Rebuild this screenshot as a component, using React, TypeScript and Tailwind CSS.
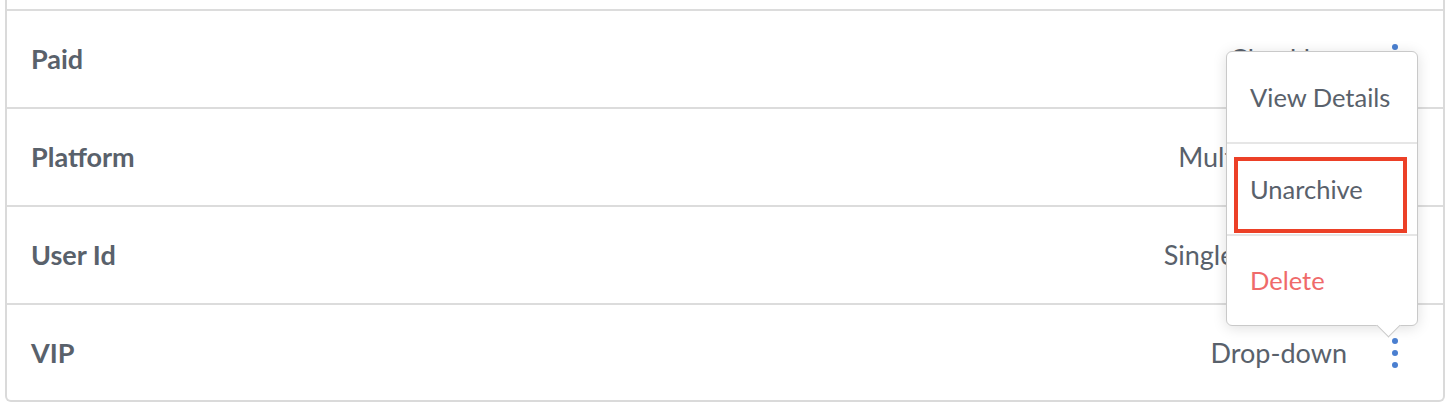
import React from "react";

const ROWS = [
  { label: "Paid", value: "Checkbox" },
  { label: "Platform", value: "Multi-line text" },
  { label: "User Id", value: "Single Line Text" },
  { label: "VIP", value: "Drop-down" },
];

const Kebab = () => (
  <span className="flex h-9 w-6 flex-col items-center justify-center gap-[6px]">
    <span className="h-[6px] w-[6px] rounded-full bg-[#4a7fd0]" />
    <span className="h-[6px] w-[6px] rounded-full bg-[#4a7fd0]" />
    <span className="h-[6px] w-[6px] rounded-full bg-[#4a7fd0]" />
  </span>
);

const ActionsMenu = () => (
  <div className="absolute bottom-[calc(100%+9px)] right-[-11px] z-10 w-[192px] rounded-[6px] border border-[#c9c9c9] bg-white shadow-[0_2px_14px_rgba(0,0,0,0.13)]">
    <div className="flex h-[90px] items-center pl-[23px] text-[25.5px] text-[#59616b]">
      View Details
    </div>
    <div className="h-[2px] bg-[#e6e6e6]" />
    <div className="relative flex h-[90px] items-center pl-[23px] text-[25.5px] text-[#59616b]">
      Unarchive
      {/* highlight box */}
      <span className="pointer-events-none absolute top-[13px] bottom-[1px] left-[7px] right-[10px] border-[4px] border-[#ec4027]" />
    </div>
    <div className="h-[2px] bg-[#e6e6e6]" />
    <div className="flex h-[89px] items-center pl-[23px] text-[25.5px] text-[#ef6a6a]">
      Delete
    </div>
    {/* arrow */}
    <span className="absolute bottom-[-9px] right-[20px] h-[17px] w-[17px] rotate-45 border-r border-b border-[#c9c9c9] bg-white" />
  </div>
);

export default function App() {
  return (
    <div className="h-[410px] overflow-hidden bg-white font-['Lato',sans-serif]">
      <div className="mx-[5px] rounded-b-[6px] border-2 border-t-0 border-[#dadada]">
        <div className="h-[11px] border-b-2 border-[#dcdcdc]" />
        {ROWS.map((row, i) => {
          const isLast = i === ROWS.length - 1;
          return (
            <div
              key={row.label}
              className={`flex items-center justify-between pl-[24px] pr-[36px] ${
                isLast ? "h-[95px] pt-[1px]" : "h-[98px] border-b-2 border-[#dcdcdc]"
              }`}
            >
              <span className="text-[27px] font-bold text-[#59616b]">{row.label}</span>
              <div className="flex items-center gap-[36px]">
                <span className="text-[27px] text-[#59616b]">{row.value}</span>
                <div className="relative">
                  <Kebab />
                  {isLast ? <ActionsMenu /> : null}
                </div>
              </div>
            </div>
          );
        })}
      </div>
    </div>
  );
}
